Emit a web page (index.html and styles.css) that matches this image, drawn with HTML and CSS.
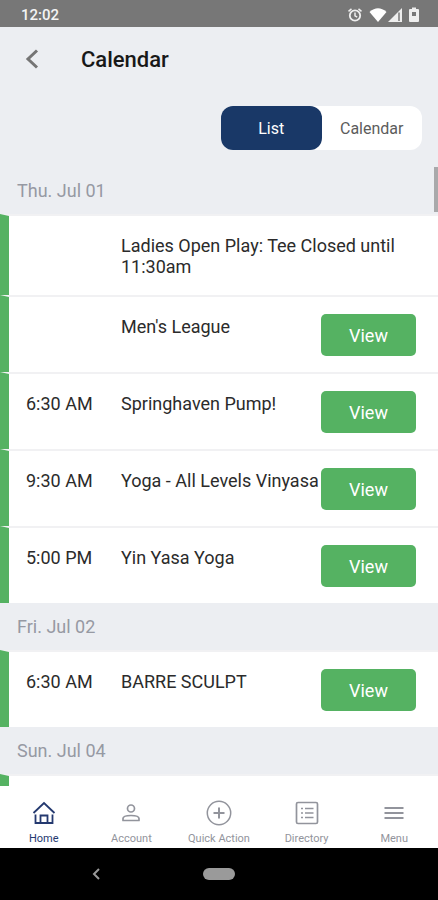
FILE: index.html
```html
<!DOCTYPE html>
<html lang="en">
<head>
<meta charset="utf-8">
<meta name="viewport" content="width=device-width, initial-scale=1">
<title>Calendar</title>
<link rel="stylesheet" href="styles.css">
</head>
<body>
<div class="status-bar">
  <span class="clock">12:02</span>
  <div class="status-icons">
    <svg width="16" height="16" viewBox="0 0 16 16" fill="none" stroke="#eee"><circle cx="8" cy="8.500" r="5.200" stroke-width="1.800"/><path d="M8 5.500v3.300l2.200 1.300M1.500 4.300l3-2.500M14.500 4.300l-3-2.500" stroke-width="1.500"/></svg>
    <svg class="wifi" width="18" height="16" viewBox="0 0 18 16"><path d="M.5 5Q9-2.500 17.500 5L9 15Z" fill="#fff"/></svg>
    <svg width="16" height="16" viewBox="0 0 16 16"><path d="M15 1v14H1Z" fill="#eee"/><path d="M12 5.500V14" stroke="#777" stroke-width="1.500"/></svg>
    <svg class="battery" width="12" height="16" viewBox="0 0 12 16"><path d="M4 .5h4V2h2q1 0 1 1v11q0 1-1 1H2q-1 0-1-1V3q0-1 1-1h2Z" fill="#eee"/><path d="M4 5h4v4H4Z" fill="#777"/></svg>
  </div>
</div>
<header class="header">
  <div class="title-row">
    <button class="back" aria-label="Back"><svg width="14" height="20" viewBox="0 0 14 20" fill="none" stroke="#757575" stroke-width="3"><path d="M12 1.500 3 10l9 8.500"/></svg></button>
    <h1 class="title">Calendar</h1>
  </div>
  <div class="segments">
    <button class="segment segment-active" aria-pressed="true">List</button>
    <button class="segment" aria-pressed="false">Calendar</button>
  </div>
</header>
<main class="schedule">
  <div class="scroll-thumb"></div>
  <h2 class="day">Thu. Jul 01</h2>
  <article class="event"><span class="time"></span><p class="name">Ladies Open Play: Tee Closed until 11:30am</p></article>
  <article class="event"><span class="time"></span><p class="name">Men's League</p><button class="view">View</button></article>
  <article class="event"><span class="time">6:30 AM</span><p class="name">Springhaven Pump!</p><button class="view">View</button></article>
  <article class="event"><span class="time">9:30 AM</span><p class="name">Yoga - All Levels Vinyasa</p><button class="view">View</button></article>
  <article class="event"><span class="time">5:00 PM</span><p class="name">Yin Yasa Yoga</p><button class="view">View</button></article>
  <h2 class="day">Fri. Jul 02</h2>
  <article class="event"><span class="time">6:30 AM</span><p class="name">BARRE SCULPT</p><button class="view">View</button></article>
  <h2 class="day">Sun. Jul 04</h2>
  <article class="event"></article>
</main>
<nav class="tabs">
  <a class="tab tab-active" href="#home">
    <svg width="26" height="26" viewBox="0 0 26 26" fill="none" stroke="currentColor" stroke-width="1.800"><path d="M2.500 13 13 3l10.500 10M4.500 14.500V23h5v-7.500h7V23h5v-8.500M9.500 23h7"/></svg>Home</a>
  <a class="tab" href="#account">
    <svg width="26" height="26" viewBox="0 0 26 26" fill="none" stroke="currentColor" stroke-width="1.700"><circle cx="13" cy="8.500" r="3.500"/><path d="M5 20.500v-2Q5 15.500 13 15.500t8 3v2Z" stroke-linejoin="round"/></svg>Account</a>
  <a class="tab" href="#quick-action">
    <svg width="26" height="26" viewBox="0 0 26 26" fill="none" stroke="currentColor" stroke-width="1.500"><circle cx="13" cy="13" r="11.700"/><path d="M13 7.500v11M7.500 13h11" stroke-width="2"/></svg>Quick Action</a>
  <a class="tab" href="#directory">
    <svg width="26" height="26" viewBox="0 0 26 26" fill="none" stroke="currentColor" stroke-width="1.700"><rect x="2.500" y="2.500" width="21" height="21" rx="1.500"/><path d="M7 8.500h2M11 8.500h8.500M7 13h2M11 13h8.500M7 17.500h2M11 17.500h8.500"/></svg>Directory</a>
  <a class="tab" href="#menu">
    <svg width="26" height="26" viewBox="0 0 26 26" fill="none" stroke="currentColor" stroke-width="2"><path d="M3.500 8h19M3.500 13h19M3.500 18h19"/></svg>Menu</a>
</nav>
<div class="system-nav">
  <button class="system-back" aria-label="System back"><svg width="8" height="12" viewBox="0 0 8 12" fill="none" stroke="#9a9a9a" stroke-width="2"><path d="M7 1 2 6l5 5"/></svg></button>
  <button class="system-home" aria-label="System home"></button>
</div>
</body>
</html>
```
FILE: styles.css
```css
* { box-sizing: border-box; }
body {
  margin: 0;
  height: 100vh;
  display: flex;
  flex-direction: column;
  background: #eceef2;
  color: #2b2b2b;
  font-family: Roboto, "Liberation Sans", sans-serif;
}
h1, h2, p { margin: 0; font-weight: 400; }
button { padding: 0; border: 0; background: none; font: inherit; cursor: pointer; }
svg { display: block; }

.status-bar {
  flex: none;
  display: flex;
  align-items: center;
  justify-content: space-between;
  height: 27px;
  padding: 2px 18px 0 21px;
  background: #777;
  color: #f4f4f4;
}
.clock { font-size: 15px; font-weight: 500; }
.status-icons { display: flex; align-items: center; }
.wifi { margin-left: 6px; }
.battery { margin-left: 5px; }

.header { flex: none; padding: 15px 16px 17px 24px; }
.title-row { display: flex; align-items: center; gap: 41px; height: 34px; }
.back { padding: 0 1px; }
.title { font-size: 22px; font-weight: 500; color: #181818; }
.segments {
  display: flex;
  width: 201px;
  height: 44px;
  margin: 30px 0 0 auto;
  border-radius: 12px;
  background: #fff;
}
.segment { flex: 1; border-radius: 12px; font-size: 16px; color: #5c5c5c; }
.segment-active { background: #193867; color: #fff; }

.schedule { position: relative; flex: 1; min-height: 0; overflow: hidden; }
.scroll-thumb { position: absolute; top: 0; right: 0; width: 4px; height: 45px; background: #a9a9ab; }
.day { padding: 0 17px; font-size: 18px; line-height: 47px; color: #9699a3; }
.event {
  display: flex;
  min-height: 77px;
  padding: 19px 22px 18px 17px;
  border-top: 2px solid #f1f1f3;
  border-left: 9px solid #55b262;
  background: #fff;
  font-size: 18px;
  line-height: 21px;
}
.time { flex: none; width: 95px; }
.name { flex: 1; }
.view {
  flex: none;
  align-self: center;
  width: 95px;
  height: 42px;
  margin: -4px 0;
  border-radius: 5px;
  background: #55b262;
  color: #fff;
}

.tabs { flex: none; display: flex; height: 62px; padding-top: 14px; background: #fff; }
.tab {
  flex: 1;
  display: flex;
  flex-direction: column;
  align-items: center;
  gap: 6px;
  color: #92949c;
  font-size: 11px;
  line-height: 14px;
  text-decoration: none;
  white-space: nowrap;
}
.tab-active { color: #24396f; }

.system-nav {
  flex: none;
  display: grid;
  grid-template-columns: 1fr 32px 1fr;
  align-items: center;
  height: 52px;
  background: #000;
}
.system-back { justify-self: center; padding: 8px; margin-right: 12px; }
.system-home { height: 12px; border-radius: 6px; background: #9a9a9a; }
```
